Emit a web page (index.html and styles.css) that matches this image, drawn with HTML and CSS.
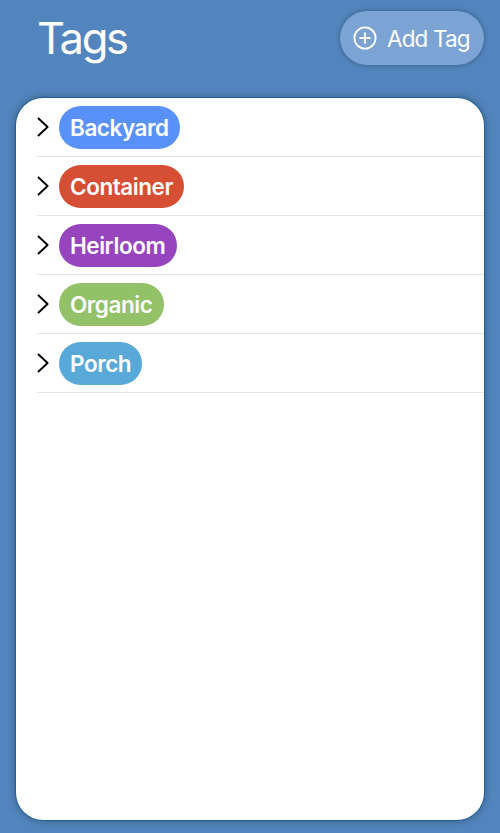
FILE: index.html
```html
<!DOCTYPE html>
<html lang="en">
<head>
<meta charset="utf-8">
<title>Tags</title>
<link rel="stylesheet" href="styles.css">
</head>
<body>
<header class="header">
  <h1 class="title">Tags</h1>
  <button class="add" type="button">
    <svg class="plus" viewBox="0 0 24 24"><circle cx="12" cy="12" r="10.6"/><path d="M12 7.1v9.8M7.1 12h9.8"/></svg>
    <span class="add-label">Add Tag</span>
  </button>
</header>
<main class="card">
  <ul class="list">
    <li class="row"><svg class="chevron" viewBox="0 0 12 20"><path d="M1 1L10.6 10L1 19"/></svg><span class="tag backyard"><span class="name">Backyard</span></span></li>
    <li class="row"><svg class="chevron" viewBox="0 0 12 20"><path d="M1 1L10.6 10L1 19"/></svg><span class="tag container"><span class="name">Container</span></span></li>
    <li class="row"><svg class="chevron" viewBox="0 0 12 20"><path d="M1 1L10.6 10L1 19"/></svg><span class="tag heirloom"><span class="name">Heirloom</span></span></li>
    <li class="row"><svg class="chevron" viewBox="0 0 12 20"><path d="M1 1L10.6 10L1 19"/></svg><span class="tag organic"><span class="name">Organic</span></span></li>
    <li class="row"><svg class="chevron" viewBox="0 0 12 20"><path d="M1 1L10.6 10L1 19"/></svg><span class="tag porch"><span class="name">Porch</span></span></li>
  </ul>
</main>
</body>
</html>
```
FILE: styles.css
```css
* { box-sizing: border-box; }
body {
  margin: 0;
  height: 833px;
  padding: 11px 16px 13px;
  display: flex;
  flex-direction: column;
  background: #5285bd;
  font-family: Inter, "Liberation Sans", sans-serif;
}
.header {
  display: flex;
  justify-content: space-between;
  align-items: center;
  height: 54px;
  margin-bottom: 33px;
  padding-left: 21px;
}
.title {
  margin: 0;
  color: #fff;
  font-size: 43.5px;
  line-height: 54px;
  font-weight: 400;
  letter-spacing: -2.3px;
}
.add {
  display: flex;
  align-items: center;
  gap: 10px;
  width: 144px;
  height: 54px;
  padding: 0 0 0 13px;
  border: 0;
  border-radius: 27px;
  background: #7ba4d5;
  box-shadow: 0 0 5px rgba(0, 0, 0, 0.35);
  color: #fff;
  font: 400 22.5px/54px Inter, "Liberation Sans", sans-serif;
  letter-spacing: -0.85px;
  white-space: nowrap;
}
.add-label { padding-top: 1px; }
.plus { width: 24px; height: 24px; flex: none; fill: none; stroke: #fff; stroke-width: 1.8; stroke-linecap: round; }
.card {
  flex: 1;
  border-radius: 27px;
  background: #fff;
  box-shadow: 0 0 0 0.7px #125a9c, 0 0 9px rgba(0, 0, 0, 0.4);
  overflow: hidden;
}
.list { list-style: none; margin: 0; padding: 0 0 0 21px; }
.row {
  display: flex;
  align-items: center;
  height: 59px;
  gap: 10px;
  border-bottom: 1px solid #e4e4e5;
}
.chevron { width: 12px; height: 20px; flex: none; fill: none; stroke: #000; stroke-width: 1.9; stroke-linejoin: round; }
.tag {
  display: flex;
  align-items: center;
  height: 43px;
  padding: 1px 0 0 11px;
  border-radius: 21.5px;
  color: #fff;
  font-size: 22.5px;
  font-weight: 600;
  letter-spacing: -0.45px;
  white-space: nowrap;
}
.backyard { width: 121px; background: #5891fa; }
.container { width: 125px; background: #d64e34; }
.heirloom { width: 118px; background: #9745be; }
.organic { width: 105px; background: #92c167; }
.porch { width: 83px; background: #59a9d8; }
```
